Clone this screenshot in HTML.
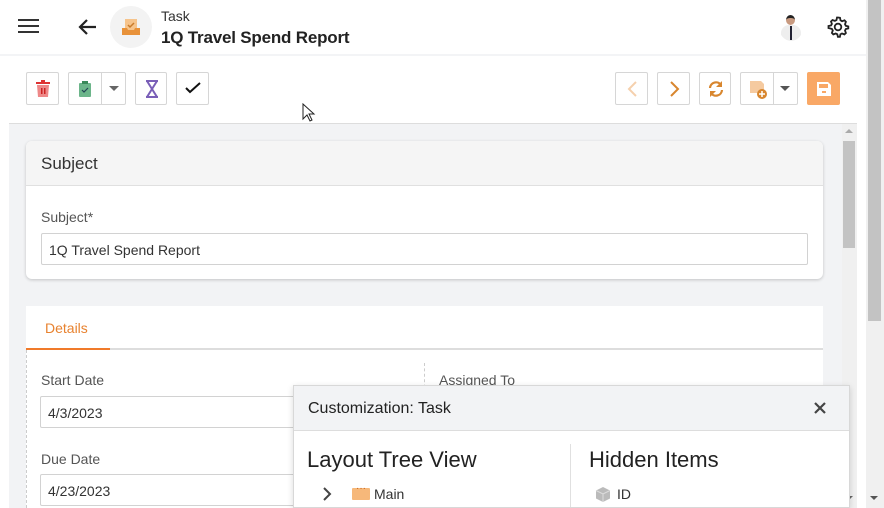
<!DOCTYPE html>
<html><head><style>
*{box-sizing:border-box;margin:0;padding:0}
body{width:884px;height:508px;overflow:hidden;background:#fff;font-family:"Liberation Sans","DejaVu Sans",sans-serif;position:relative;color:#222}
.a{position:absolute}
.btn{position:absolute;top:72px;height:33px;border:1px solid #d6d6d6;border-radius:2px;background:#fff}
.card{position:absolute;background:#fff;border-radius:6px;box-shadow:0 1px 3px rgba(0,0,0,.2)}
.lbl{position:absolute;font-size:14px;color:#555}
.inp{position:absolute;height:32px;border:1px solid #d2d2d2;border-radius:2px;background:#fff;font-size:14px;padding:8px 0 0 7px;color:#333}
</style></head><body>
<!-- header -->
<div class="a" style="left:18px;top:19px;width:21px;height:2px;background:#333;box-shadow:0 6px 0 #333,0 12px 0 #333"></div>
<svg class="a" style="left:76px;top:15px" width="24" height="24" viewBox="0 0 24 24"><path d="M20 12H5M11 5l-7 7 7 7" stroke="#222" stroke-width="2.2" fill="none"/></svg>
<div class="a" style="left:110px;top:6px;width:42px;height:42px;border-radius:50%;background:#f3f3f3"></div>
<svg class="a" style="left:121px;top:17px" width="20" height="20" viewBox="0 0 20 20"><rect x="4" y="2" width="12" height="11" fill="#f6c48c"/><path d="M7 8l2 2 4-4" stroke="#c87a2a" stroke-width="1.5" fill="none"/><path d="M1 11h5l1 2h6l1-2h5v7H1z" fill="#e8923a"/></svg>
<div class="a" style="left:161px;top:8px;font-size:14px;color:#333">Task</div>
<div class="a" style="left:161px;top:28px;font-size:17px;font-weight:bold;color:#222;letter-spacing:-0.2px">1Q Travel Spend Report</div>
<div class="a" style="left:779px;top:13px;width:24px;height:28px;border-radius:50%;overflow:hidden;background:#fff">
<div style="position:absolute;left:7px;top:2px;width:9px;height:10px;border-radius:50%;background:#c89a80;border-top:3px solid #222"></div>
<div style="position:absolute;left:2px;top:12px;width:20px;height:16px;border-radius:8px 8px 0 0;background:#eee"></div>
<div style="position:absolute;left:11px;top:13px;width:2px;height:14px;background:#223"></div></div>
<svg class="a" style="left:826px;top:15px" width="24" height="24" viewBox="0 0 24 24"><path d="M12 2.5l2 .3.5 2.5 1.6.9 2.4-.9 1.4 1.5-.9 2.4.8 1.6 2.5.6v2l-2.5.6-.8 1.6.9 2.4-1.5 1.4-2.4-.9-1.6.8-.5 2.5h-2l-.6-2.5-1.6-.8-2.4.9-1.4-1.5.9-2.4-.9-1.6L2.5 13v-2l2.5-.5.9-1.6-.9-2.4L6.5 5l2.4.9 1.6-.9.5-2.5z" stroke="#222" stroke-width="1.8" fill="none"/><circle cx="12" cy="12" r="3.3" stroke="#222" stroke-width="1.8" fill="none"/></svg>
<div class="a" style="left:0;top:54px;width:866px;height:2px;background:#f3f4f6"></div>
<!-- toolbar -->
<div class="btn" style="left:26px;width:33px"><svg style="position:absolute;left:8px;top:7px" width="16" height="18" viewBox="0 0 16 18"><rect x="1" y="2" width="14" height="2" fill="#d33"/><rect x="6" y="0" width="4" height="2" fill="#d33"/><path d="M2 5h12l-1 12H3z" fill="#e88"/><rect x="6" y="8" width="1.5" height="6" fill="#c22"/><rect x="9" y="8" width="1.5" height="6" fill="#c22"/></svg></div>
<div class="btn" style="left:68px;width:58px"><svg style="position:absolute;left:9px;top:7px" width="14" height="18" viewBox="0 0 14 18"><rect x="1" y="3" width="12" height="14" rx="1" fill="#6cb58a"/><rect x="4" y="1" width="6" height="3" fill="#3a8a5a"/><path d="M4 10l2 2 4-4" stroke="#245" stroke-width="1.2" fill="none"/></svg><div style="position:absolute;left:32px;top:0;width:1px;height:31px;background:#d6d6d6"></div><div style="position:absolute;left:40px;top:13px;border:5px solid transparent;border-top:5px solid #666"></div></div>
<div class="btn" style="left:135px;width:32px"><svg style="position:absolute;left:8px;top:7px" width="16" height="18" viewBox="0 0 16 18"><path d="M2 1h12M2 17h12M3 1l10 16M13 1L3 17" stroke="#7a5fb8" stroke-width="2" fill="none"/></svg></div>
<div class="btn" style="left:176px;width:33px"><svg style="position:absolute;left:8px;top:8px" width="16" height="14" viewBox="0 0 16 14"><path d="M1 7l4 4 10-9" stroke="#111" stroke-width="2" fill="none"/></svg></div>
<svg class="a" style="left:302px;top:103px" width="14" height="20" viewBox="0 0 14 20"><path d="M1 1v15l4-4 3 6 2-1-3-6h5z" fill="#fff" stroke="#222"/></svg>
<div class="btn" style="left:615px;width:33px"><svg style="position:absolute;left:10px;top:8px" width="12" height="16" viewBox="0 0 12 16"><path d="M10 1L3 8l7 7" stroke="#f5d0ad" stroke-width="2" fill="none"/></svg></div>
<div class="btn" style="left:657px;width:33px"><svg style="position:absolute;left:11px;top:8px" width="12" height="16" viewBox="0 0 12 16"><path d="M2 1l7 7-7 7" stroke="#d8862e" stroke-width="2" fill="none"/></svg></div>
<div class="btn" style="left:699px;width:32px"><svg style="position:absolute;left:7px;top:7px" width="18" height="18" viewBox="0 0 18 18"><path d="M3 8a6 6 0 0 1 11-3M15 10a6 6 0 0 1-11 3" stroke="#d8862e" stroke-width="2.2" fill="none"/><path d="M15 1v6h-6zM3 17v-6h6z" fill="#d8862e"/></svg></div>
<div class="btn" style="left:740px;width:58px"><svg style="position:absolute;left:8px;top:7px" width="20" height="20" viewBox="0 0 20 20"><path d="M1 1h11l3 3v9H1z" fill="#f5caa0"/><circle cx="13" cy="14" r="5" fill="#d8862e"/><path d="M13 11v6M10 14h6" stroke="#fff" stroke-width="1.5"/></svg><div style="position:absolute;left:32px;top:0;width:1px;height:31px;background:#d6d6d6"></div><div style="position:absolute;left:39px;top:13px;border:5px solid transparent;border-top:5px solid #555"></div></div>
<div class="a" style="left:807px;top:72px;width:33px;height:33px;background:#f9a866;border-radius:2px"><svg style="position:absolute;left:9px;top:9px" width="16" height="16" viewBox="0 0 16 16"><path d="M1 1h11l3 3v11H1z" fill="#fff"/><rect x="3" y="3" width="9" height="4" fill="#f9a866"/><rect x="6" y="10" width="4" height="2" fill="#f9a866"/></svg></div>
<!-- content area -->
<div class="a" style="left:9px;top:123px;width:848px;height:385px;background:#f2f3f5;border-top:1px solid #ddd"></div>
<div class="a" style="left:842px;top:124px;width:15px;height:384px;background:#f0f0f0"></div>
<div class="a" style="left:843px;top:141px;width:12px;height:107px;background:#c3c3c3"></div>
<div class="a" style="left:845px;top:129px;border:4px solid transparent;border-bottom:4px solid #aaa;border-top:0"></div>
<div class="a" style="left:845px;top:496px;border:4px solid transparent;border-top:4px solid #666;border-bottom:0"></div>
<div class="a" style="left:866px;top:0;width:18px;height:508px;background:#f0f0f0"></div>
<div class="a" style="left:868px;top:0;width:13px;height:321px;background:#c3c3c3"></div>
<div class="a" style="left:870px;top:496px;border:4px solid transparent;border-top:4px solid #555;border-bottom:0"></div>
<!-- subject card -->
<div class="card" style="left:26px;top:141px;width:797px;height:138px;overflow:hidden">
<div style="height:45px;background:#f5f5f5;border-bottom:1px solid #e0e0e0;font-size:17px;padding:13px 0 0 15px;color:#333">Subject</div>
</div>
<div class="lbl" style="left:41px;top:209px">Subject*</div>
<div class="inp" style="left:41px;top:233px;width:767px">1Q Travel Spend Report</div>
<!-- details card -->
<div class="a" style="left:26px;top:306px;width:797px;height:202px;background:#fff"></div>
<div class="a" style="left:45px;top:320px;font-size:14px;color:#e8822f">Details</div>
<div class="a" style="left:26px;top:348px;width:797px;height:2px;background:#ddd"></div>
<div class="a" style="left:26px;top:348px;width:84px;height:2px;background:#f07a2a"></div>
<div class="a" style="left:26px;top:350px;height:158px;border-left:1px dashed #ccc"></div>
<div class="a" style="left:424px;top:363px;height:30px;border-left:1px dashed #ccc"></div>
<div class="lbl" style="left:41px;top:372px">Start Date</div>
<div class="inp" style="left:40px;top:396px;width:270px">4/3/2023</div>
<div class="lbl" style="left:439px;top:372px">Assigned To</div>
<div class="lbl" style="left:41px;top:451px">Due Date</div>
<div class="inp" style="left:40px;top:474px;width:270px">4/23/2023</div>
<!-- popup -->
<div class="a" style="left:293px;top:385px;width:557px;height:123px;background:#fff;border:1px solid #d8d8d8;box-shadow:0 2px 6px rgba(0,0,0,.15);overflow:hidden">
<div style="height:45px;background:#f2f3f5;border-bottom:1px solid #ddd;font-size:16px;padding:14px 0 0 14px;color:#222">Customization: Task</div>
<svg style="position:absolute;left:520px;top:16px" width="12" height="12" viewBox="0 0 12 12"><path d="M1 1l10 10M11 1L1 11" stroke="#444" stroke-width="2.2"/></svg>
<div style="position:absolute;left:276px;top:58px;width:1px;height:70px;background:#e0e0e0"></div>
<div style="position:absolute;left:13px;top:61px;font-size:22px;color:#222">Layout Tree View</div>
<div style="position:absolute;left:295px;top:61px;font-size:22px;color:#222">Hidden Items</div>
<svg style="position:absolute;left:28px;top:101px" width="10" height="14" viewBox="0 0 10 14"><path d="M2 1l6 6-6 6" stroke="#444" stroke-width="2" fill="none"/></svg>
<div style="position:absolute;left:58px;top:102px;width:18px;height:12px;background:#f6b87a;border-radius:1px"><span style="position:absolute;left:4px;top:-5px;color:#c8621a;font-size:10px">···</span></div>
<div style="position:absolute;left:80px;top:100px;font-size:14px;color:#333">Main</div>
<svg style="position:absolute;left:301px;top:100px" width="16" height="17" viewBox="0 0 16 17"><path d="M8 1l7 3.5v8L8 16 1 12.5v-8z" fill="#bbb"/><path d="M1 4.5L8 8l7-3.5M8 8v8" stroke="#ddd" stroke-width="1" fill="none"/></svg>
<div style="position:absolute;left:323px;top:100px;font-size:14px;color:#333">ID</div>
</div>
</body></html>
